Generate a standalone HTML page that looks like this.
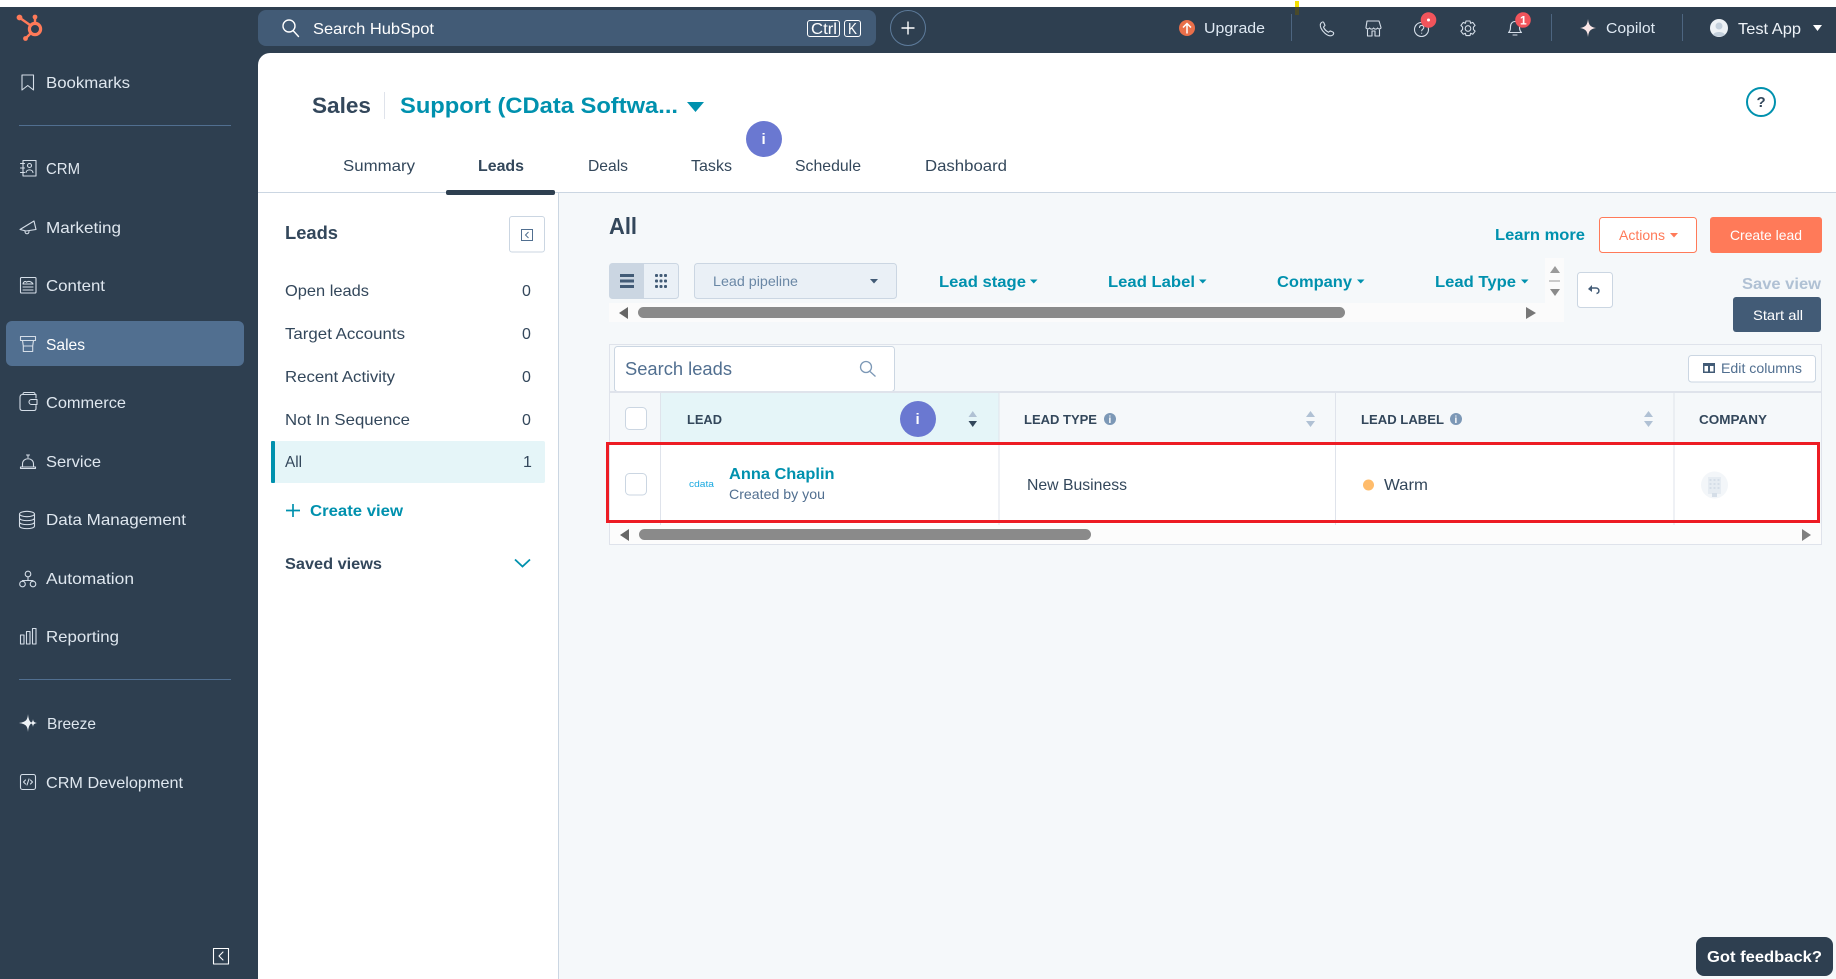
<!DOCTYPE html>
<html lang="en">
<head>
<meta charset="utf-8">
<title>HubSpot Sales - Leads</title>
<style>
html,body{margin:0;padding:0;background:#fff;width:1836px;height:979px;overflow:hidden}
svg{display:block;position:absolute;left:0;top:0}
text{font-family:"Liberation Sans",sans-serif;font-size:16px}
.n{fill:#dfe7ef}
.t{fill:#33475b}
.b{font-weight:700}
.l{fill:#0091ae;font-weight:700}
.i{fill:none;stroke:#d5dee8;stroke-width:1.1;stroke-linecap:round;stroke-linejoin:round}
.h{font-size:13px;font-weight:700;fill:#33475b}
</style>
</head>
<body>
<svg width="1836" height="979" viewBox="0 0 1836 979" xmlns="http://www.w3.org/2000/svg">
<rect width="1836" height="979" fill="#fff"/>
<!-- chrome -->
<rect y="7" width="1836" height="46" fill="#2e3f50"/>
<rect y="7" width="258" height="972" fill="#2e3f50"/>
<rect x="258" y="53" width="14" height="14" fill="#2e3f50"/>
<rect x="1295" y="1" width="4" height="6" fill="#f5e000"/>
<rect x="1295" y="7" width="4" height="8" fill="#4a4a2a"/>

<!-- logo -->
<g fill="none" stroke="#ff7a59" stroke-width="2.4" stroke-linecap="round">
<circle cx="35" cy="29" r="5.600" stroke-width="3.200"/>
<path d="M35 18v5M20 18l10 7M26 38l5-5"/>
</g>
<g fill="#ff7a59"><circle cx="19.500" cy="17.500" r="2.900"/><circle cx="35" cy="17" r="2.400"/><circle cx="25.500" cy="38.500" r="2.400"/></g>

<!-- search -->
<rect x="258" y="10" width="618" height="36" rx="8" fill="#425b76"/>
<g fill="none" stroke="#fff" stroke-width="1.4" stroke-linecap="round"><circle cx="289" cy="26" r="6"/><path d="M293.500 31l5 5.500"/></g>
<text x="313" y="34" fill="#fff" textLength="121" lengthAdjust="spacingAndGlyphs">Search HubSpot</text>
<rect x="807.500" y="20.500" width="32" height="16" rx="2.500" fill="none" stroke="#fff"/>
<rect x="844.500" y="20.500" width="16" height="16" rx="2.500" fill="none" stroke="#fff"/>
<text x="811" y="34" fill="#fff" textLength="26" lengthAdjust="spacingAndGlyphs">Ctrl</text>
<text x="848" y="34" fill="#fff" textLength="9" lengthAdjust="spacingAndGlyphs">K</text>
<circle cx="908" cy="28" r="17.500" fill="none" stroke="#5d7b9b"/>
<path d="M908 21.500v13M901.500 28h13" stroke="#fff" stroke-width="1.400"/>

<!-- top right -->
<circle cx="1187" cy="28" r="8" fill="#e96f4a"/>
<path d="M1187 33.500v-10M1183 27.500l4-4 4 4" fill="none" stroke="#fff" stroke-width="1.500"/>
<text x="1204" y="33" fill="#dfe9f3" style="font-size:15px" textLength="61" lengthAdjust="spacingAndGlyphs">Upgrade</text>
<path d="M1291.500 14v27M1551.500 14v27M1682.500 14v27" stroke="#4d6580"/>
<g class="i">
<path d="M1321 23c1.500-1.500 2.500-1.500 3 0l1 2.500-1.500 1.500c.8 2.200 2.500 4 5 5.200l1.700-1.300 2.600 1.100c1.200.6 1.200 1.700 0 3-2 1.600-5 .6-7.800-1.700-3.400-2.800-6-7.500-4-10.300z"/>
<path d="M1367 21h12l2 6.500c0 1.500-2.400 2-3.400 .5-1 1.500-3 1.500-4 0-1 1.500-3 1.500-4 0-1 1.500-3.600 1-3.600-.5zM1367.500 30v6h4.500v-5h3v5h4.500v-6"/>
<circle cx="1421.500" cy="29.500" r="7"/>
<path d="M1419.500 27.500c.3-2.800 4.500-2.600 4.300 0 0 1.600-2 1.800-2.100 3.300M1421.700 33.200v.1"/>
<circle cx="1468" cy="28.500" r="2.800"/>
<path d="M1466 21h4l.6 2.300 2.200-.9 2.300 3-1.700 1.700v2.400l1.700 1.700-2.300 3-2.200-.9-.6 2.300h-4l-.6-2.300-2.200.9-2.300-3 1.700-1.700v-2.400l-1.700-1.700 2.300-3 2.200.9z"/>
<path d="M1508.500 32.500c2-1.600 2-3.800 2-6 0-3 2-5 4.500-5s4.500 2 4.500 5c0 2.200 0 4.400 2 6zM1513 35h4"/>
</g>
<circle cx="1428.500" cy="20" r="7.800" fill="#f2545b"/><circle cx="1428.500" cy="20" r="1.500" fill="#fff"/>
<circle cx="1523" cy="20" r="7.800" fill="#f2545b"/>
<text x="1520" y="24.500" fill="#fff" class="b" style="font-size:12px">1</text>
<path d="M1588 19c.7 6 2.200 8 8 9-5.800 1-7.300 3-8 9-.7-6-2.200-8-8-9 5.800-1 7.300-3 8-9z" fill="#fbe6e6"/>
<text x="1606" y="33" fill="#dfe9f3" style="font-size:15px" textLength="49" lengthAdjust="spacingAndGlyphs">Copilot</text>
<circle cx="1719" cy="28" r="9" fill="#eef2f6"/>
<circle cx="1719" cy="26" r="3.500" fill="#c4d0dc"/>
<path d="M1713 35c1-4 11-4 12 0-3 2-9 2-12 0z" fill="#c4d0dc"/>
<text x="1738" y="34" fill="#eef3f8" textLength="63" lengthAdjust="spacingAndGlyphs">Test App</text>
<path d="M1813 25h9l-4.500 6z" fill="#fff"/>

<!-- sidebar -->
<rect x="6" y="321" width="238" height="45" rx="6" fill="#516f90"/>
<path d="M19 125.500h212M19 679.500h212" stroke="#516f90"/>
<g class="n">
<text x="46" y="88" textLength="84" lengthAdjust="spacingAndGlyphs">Bookmarks</text>
<text x="46" y="174" textLength="34" lengthAdjust="spacingAndGlyphs">CRM</text>
<text x="46" y="233" textLength="75" lengthAdjust="spacingAndGlyphs">Marketing</text>
<text x="46" y="291" textLength="59" lengthAdjust="spacingAndGlyphs">Content</text>
<text x="46" y="350" style="fill:#fff" textLength="39" lengthAdjust="spacingAndGlyphs">Sales</text>
<text x="46" y="408" textLength="80" lengthAdjust="spacingAndGlyphs">Commerce</text>
<text x="46" y="467" textLength="55" lengthAdjust="spacingAndGlyphs">Service</text>
<text x="46" y="525" textLength="140" lengthAdjust="spacingAndGlyphs">Data Management</text>
<text x="46" y="584" textLength="88" lengthAdjust="spacingAndGlyphs">Automation</text>
<text x="46" y="642" textLength="73" lengthAdjust="spacingAndGlyphs">Reporting</text>
<text x="47" y="729" textLength="49" lengthAdjust="spacingAndGlyphs">Breeze</text>
<text x="46" y="788" textLength="137" lengthAdjust="spacingAndGlyphs">CRM Development</text>
</g>
<g class="i">
<path d="M22 75h11.500v15l-5.750-4.500-5.750 4.500z"/>
<path d="M23 160.500h13v15.500H23zM20.500 163.500h4M20.500 168h4M20.500 172.500h4"/>
<circle cx="29.500" cy="165.500" r="2"/><path d="M26 172.500c.5-3.500 6.500-3.500 7 0"/>
<path d="M20 229.500l14-8.500 2 8.500-10 1.500zM25 231.500c0 3 4 3 4 0"/>
<rect x="20.500" y="277.500" width="15.500" height="15.500" rx="1"/>
<path d="M23 284c.5-2 2-3.500 3.500-1.800 1.500-1.400 5-1 6.500 1.800zM23 287h10M23 290h10"/>
<path d="M20.500 336.500h15v4h-15zM22.500 340.500l.8 5.500h9.400l.8-5.500M23.300 346v5.500h9.400V346"/>
<path d="M36 398v-3.500h-13.500c-2 0-2.500 1.500-2.500 3v10.500c0 1.500 1 2.500 2.500 2.500H34c1.200 0 2-.8 2-2v-3M23 394.500v-.5c0-.8.8-1.500 1.500-1.500h9c.8 0 1.500.7 1.500 1.500v.5M36.500 399.500h-5a2.500 2.500 0 0 0 0 5h5.500v-5z"/>
<path d="M20.500 467h15v1.500h-15zM22.500 466.500v-2.500c0-7 11-7 11 0v2.500M28 457.500v-2.500M26.500 455h3"/>
<ellipse cx="27" cy="514" rx="7.500" ry="2.700"/>
<path d="M19.500 514v12c0 3.500 15 3.500 15 0v-12M19.500 518c0 3.500 15 3.500 15 0M19.500 522c0 3.500 15 3.500 15 0"/>
<circle cx="28" cy="574" r="2.800"/><circle cx="22.500" cy="584" r="2.800"/><circle cx="33" cy="584" r="2.800"/>
<path d="M28 577v3.500M22.500 581.200v-.7h10.500v.7"/>
<rect x="20.500" y="635" width="3.500" height="9"/><rect x="26.500" y="631.500" width="3.500" height="12.500"/><rect x="32.500" y="628.500" width="3.500" height="15.500"/>
<rect x="20.500" y="774.500" width="15" height="15" rx="2"/>
<path d="M25.500 780l-2 2 2 2M30.500 780l2 2-2 2M29 779l-2 6"/>
<rect x="213.500" y="948.500" width="15" height="15.500" style="stroke:#fff"/>
<path d="M223 952l-4 4 4 4" style="stroke:#fff"/>
</g>
<path d="M28 714c.5 6 2 8 4 9-2 1-3.500 3-4 9-.5-6-2-8-9-9 7-1 8.500-3 9-9zM33 719c.3 2.500 1 3.500 4 4-3 .5-3.700 1.500-4 4-.3-2.500-1-3.500-3-4 2-.5 2.700-1.500 3-4z" fill="#eef2f6"/>

<!-- main content -->
<path d="M258 979V65a12 12 0 0 1 12-12h1566v926z" fill="#fff"/>
<rect x="559" y="193" width="1277" height="786" fill="#f5f8fa"/>
<path d="M258 192.500h1578" stroke="#cbd6e2"/>
<path d="M558.500 193v786" stroke="#cbd6e2"/>
<rect x="446" y="190" width="109" height="5" rx="2" fill="#2e3f50"/>

<text x="312" y="113" class="b" fill="#33475b" style="font-size:22px" textLength="59" lengthAdjust="spacingAndGlyphs">Sales</text>
<path d="M384.500 92v27" stroke="#dfe3eb"/>
<text x="400" y="113" class="l" style="font-size:22px" textLength="278" lengthAdjust="spacingAndGlyphs">Support (CData Softwa...</text>
<path d="M687 102h17l-8.500 10z" fill="#0091ae"/>
<circle cx="1761" cy="102" r="14" fill="#fff" stroke="#0091ae" stroke-width="2"/>
<text x="1756.500" y="107" fill="#33475b" class="b" style="font-size:15px">?</text>

<g class="t">
<text x="343" y="171" textLength="72" lengthAdjust="spacingAndGlyphs">Summary</text>
<text x="478" y="171" class="b" textLength="46" lengthAdjust="spacingAndGlyphs">Leads</text>
<text x="588" y="171" textLength="40" lengthAdjust="spacingAndGlyphs">Deals</text>
<text x="691" y="171" textLength="41" lengthAdjust="spacingAndGlyphs">Tasks</text>
<text x="795" y="171" textLength="66" lengthAdjust="spacingAndGlyphs">Schedule</text>
<text x="925" y="171" textLength="82" lengthAdjust="spacingAndGlyphs">Dashboard</text>
</g>
<circle cx="764" cy="139" r="18" fill="#6a78d1"/>
<text x="761.500" y="144" fill="#fff" class="b" style="font-size:15px">i</text>

<!-- left panel -->
<text x="285" y="239" class="b t" style="font-size:18px" textLength="53" lengthAdjust="spacingAndGlyphs">Leads</text>
<rect x="509.500" y="216.500" width="35" height="35.500" rx="2.500" fill="#fff" stroke="#cbd6e2"/>
<rect x="521.500" y="229.500" width="11" height="11" fill="none" stroke="#516f90"/>
<path d="M528.500 232l-3 3 3 3" fill="none" stroke="#516f90"/>
<g class="t">
<text x="285" y="296" textLength="84" lengthAdjust="spacingAndGlyphs">Open leads</text>
<text x="522" y="296">0</text>
<text x="285" y="339" textLength="120" lengthAdjust="spacingAndGlyphs">Target Accounts</text>
<text x="522" y="339">0</text>
<text x="285" y="382" textLength="110" lengthAdjust="spacingAndGlyphs">Recent Activity</text>
<text x="522" y="382">0</text>
<text x="285" y="425" textLength="125" lengthAdjust="spacingAndGlyphs">Not In Sequence</text>
<text x="522" y="425">0</text>
</g>
<rect x="271" y="441" width="274" height="42" rx="2" fill="#e5f5f8"/>
<rect x="271" y="441" width="4" height="42" rx="1" fill="#0091ae"/>
<text x="285" y="467" class="t" textLength="17" lengthAdjust="spacingAndGlyphs">All</text>
<text x="523" y="467" class="t">1</text>
<path d="M293 504v13M286 510.500h14" stroke="#0091ae" stroke-width="1.700"/>
<text x="310" y="516" class="l" textLength="93" lengthAdjust="spacingAndGlyphs">Create view</text>
<text x="285" y="569" class="b t" textLength="97" lengthAdjust="spacingAndGlyphs">Saved views</text>
<path d="M515 559.500l7.500 7 7.500-7" fill="none" stroke="#0091ae" stroke-width="1.800"/>

<!-- toolbar -->
<text x="609" y="234" class="b t" style="font-size:23px" textLength="28" lengthAdjust="spacingAndGlyphs">All</text>
<text x="1495" y="240" class="l" textLength="90" lengthAdjust="spacingAndGlyphs">Learn more</text>
<rect x="1599.500" y="217.500" width="97" height="35" rx="3" fill="#fff" stroke="#ff7a59"/>
<text x="1619" y="240" fill="#ff7a59" style="font-size:14px" textLength="46" lengthAdjust="spacingAndGlyphs">Actions</text>
<path d="M1670 233h8l-4 4.500z" fill="#ff7a59"/>
<rect x="1710" y="217" width="112" height="36" rx="3" fill="#ff7a59"/>
<text x="1730" y="240" fill="#fff" style="font-size:14px" textLength="72" lengthAdjust="spacingAndGlyphs">Create lead</text>

<rect x="609.500" y="263.500" width="69" height="35" rx="3" fill="#eaf0f6" stroke="#cbd6e2"/>
<path d="M610 264h34v34h-34z" fill="#cbd6e2"/>
<path d="M620 274h14v3h-14zM620 279.500h14v3h-14zM620 285h14v3h-14z" fill="#425b76"/>
<g fill="#425b76"><rect x="655" y="274" width="3" height="3" rx="1"/><rect x="659.500" y="274" width="3" height="3" rx="1"/><rect x="664" y="274" width="3" height="3" rx="1"/><rect x="655" y="279.500" width="3" height="3" rx="1"/><rect x="659.500" y="279.500" width="3" height="3" rx="1"/><rect x="664" y="279.500" width="3" height="3" rx="1"/><rect x="655" y="285" width="3" height="3" rx="1"/><rect x="659.500" y="285" width="3" height="3" rx="1"/><rect x="664" y="285" width="3" height="3" rx="1"/></g>
<rect x="694.500" y="263.500" width="202" height="35" rx="3" fill="#eaf0f6" stroke="#cbd6e2"/>
<text x="713" y="286" fill="#6a87a5" style="font-size:14px" textLength="85" lengthAdjust="spacingAndGlyphs">Lead pipeline</text>
<path d="M870 279h8l-4 4.500z" fill="#425b76"/>

<rect x="1545" y="258" width="19" height="64" fill="#fbfbfb"/>
<rect x="609" y="303" width="955" height="19" fill="#fbfbfb"/>
<path d="M628 307v12l-9-6z" fill="#666"/>
<rect x="638" y="307" width="707" height="11" rx="5.500" fill="#8a8a8a"/>
<path d="M1526 307v12l10-6z" fill="#777"/>
<path d="M1550 273l5-7 5 7z" fill="#9a9a9a"/>
<path d="M1549 281h11" stroke="#9a9a9a"/>
<path d="M1550 289l5 7 5-7z" fill="#8a8a8a"/>

<g class="l">
<text x="939" y="287" textLength="87" lengthAdjust="spacingAndGlyphs">Lead stage</text>
<text x="1108" y="287" textLength="87" lengthAdjust="spacingAndGlyphs">Lead Label</text>
<text x="1277" y="287" textLength="75" lengthAdjust="spacingAndGlyphs">Company</text>
<text x="1435" y="287" textLength="81" lengthAdjust="spacingAndGlyphs">Lead Type</text>
</g>
<path d="M1030 279.500h7.500l-3.750 4zM1199 279.500h7.500l-3.750 4zM1357 279.500h7.500l-3.750 4zM1521 279.500h7.500l-3.750 4z" fill="#0091ae"/>
<rect x="1577.500" y="272.500" width="35" height="35" rx="3" fill="#fff" stroke="#cbd6e2"/>
<path d="M1590 288h6c3.500 0 4 5 .5 5.500" fill="none" stroke="#425b76" stroke-width="1.500"/>
<path d="M1588 289l4-4v7z" fill="#425b76"/>
<text x="1742" y="289" class="b" fill="#b0c1d4" textLength="79" lengthAdjust="spacingAndGlyphs">Save view</text>
<rect x="1733" y="297" width="88" height="35" rx="3" fill="#425b76"/>
<text x="1753" y="320" fill="#fff" style="font-size:14px" textLength="50" lengthAdjust="spacingAndGlyphs">Start all</text>

<!-- table -->
<rect x="609.500" y="344.500" width="1212" height="200" fill="#f5f8fa" stroke="#dfe3eb"/>
<rect x="614.500" y="346.500" width="280" height="45" rx="3" fill="#fff" stroke="#cbd6e2"/>
<text x="625" y="375" fill="#516f90" style="font-size:18px" textLength="107" lengthAdjust="spacingAndGlyphs">Search leads</text>
<g fill="none" stroke="#7c98b6" stroke-width="1.300"><circle cx="866" cy="367" r="5.500"/><path d="M870 371.500l5.500 5"/></g>
<rect x="1688.500" y="355.500" width="127" height="26.500" rx="3" fill="#fff" stroke="#cbd6e2"/>
<path d="M1703 363h12v10h-12z" fill="#425b76"/>
<path d="M1704.500 366h3.500v5.500h-3.500zM1710 366h3.500v5.500H1710z" fill="#fff"/>
<text x="1721" y="373" fill="#516f90" style="font-size:14px" textLength="81" lengthAdjust="spacingAndGlyphs">Edit columns</text>

<rect x="610" y="391" width="1211" height="2" fill="#dfe3eb"/>
<rect x="661" y="393" width="338" height="49" fill="#e5f5f8"/>
<rect x="610" y="445" width="1209" height="79" fill="#fff"/>
<rect x="610" y="524" width="1211" height="20" fill="#fcfcfc"/>
<path d="M660.500 393v132M999 393v132M1335.500 393v132M1674 393v132" stroke="#dfe3eb"/>
<rect x="625.500" y="407.500" width="21" height="22" rx="4" fill="#fff" stroke="#cbd6e2"/>
<text x="687" y="424" class="h" textLength="35" lengthAdjust="spacingAndGlyphs">LEAD</text>
<circle cx="918" cy="419" r="18" fill="#6a78d1"/>
<text x="915.500" y="424" fill="#fff" class="b" style="font-size:15px">i</text>
<path d="M968.500 417l4.250-6 4.250 6z" fill="#b0c1d4"/>
<path d="M968.500 421l4.250 6 4.250-6z" fill="#33475b"/>
<text x="1024" y="424" class="h" textLength="73" lengthAdjust="spacingAndGlyphs">LEAD TYPE</text>
<circle cx="1110" cy="419" r="6" fill="#7c98b6"/>
<text x="1108.500" y="423" fill="#fff" class="b" style="font-size:10px">i</text>
<path d="M1306 417l4.500-6 4.500 6zM1306 421l4.500 6 4.500-6z" fill="#b0c1d4"/>
<text x="1361" y="424" class="h" textLength="83" lengthAdjust="spacingAndGlyphs">LEAD LABEL</text>
<circle cx="1456" cy="419" r="6" fill="#7c98b6"/>
<text x="1454.500" y="423" fill="#fff" class="b" style="font-size:10px">i</text>
<path d="M1644 417l4.500-6 4.500 6zM1644 421l4.500 6 4.500-6z" fill="#b0c1d4"/>
<text x="1699" y="424" class="h" textLength="68" lengthAdjust="spacingAndGlyphs">COMPANY</text>

<rect x="625.500" y="473.500" width="21" height="21.500" rx="4" fill="#fff" stroke="#cbd6e2"/>
<text x="689" y="487" fill="#1aa9e0" style="font-size:9px" textLength="25" lengthAdjust="spacingAndGlyphs">cdata</text>
<text x="729" y="479" class="l" textLength="105.500" lengthAdjust="spacingAndGlyphs">Anna Chaplin</text>
<text x="729" y="499" fill="#516f90" style="font-size:14px" textLength="96" lengthAdjust="spacingAndGlyphs">Created by you</text>
<text x="1027" y="490" class="t" textLength="100" lengthAdjust="spacingAndGlyphs">New Business</text>
<circle cx="1368.500" cy="485" r="5.500" fill="#ffbc6b"/>
<text x="1384" y="490" class="t" textLength="44" lengthAdjust="spacingAndGlyphs">Warm</text>
<circle cx="1714.500" cy="485" r="13.500" fill="#f3f6f9"/>
<rect x="1708" y="477" width="13" height="17" fill="#e6ecf2"/>
<g fill="#d5dee8"><rect x="1709.500" y="479" width="2" height="2"/><rect x="1713.500" y="479" width="2" height="2"/><rect x="1717.500" y="479" width="2" height="2"/><rect x="1709.500" y="483" width="2" height="2"/><rect x="1713.500" y="483" width="2" height="2"/><rect x="1717.500" y="483" width="2" height="2"/><rect x="1709.500" y="487" width="2" height="2"/><rect x="1713.500" y="487" width="2" height="2"/><rect x="1717.500" y="487" width="2" height="2"/><rect x="1712" y="493" width="5" height="4"/></g>

<path d="M629 529v12l-9-6z" fill="#666"/>
<rect x="639" y="529" width="452" height="11" rx="5.500" fill="#8a8a8a"/>
<path d="M1802 529v12l9-6z" fill="#808080"/>
<rect x="607.500" y="443.500" width="1211" height="78" fill="none" stroke="#ed1c24" stroke-width="3"/>

<!-- feedback -->
<rect x="1696" y="937" width="137" height="39" rx="8" fill="#2e3f50"/>
<text x="1707" y="962" fill="#fff" class="b" textLength="115" lengthAdjust="spacingAndGlyphs">Got feedback?</text>
</svg>
</body>
</html>
